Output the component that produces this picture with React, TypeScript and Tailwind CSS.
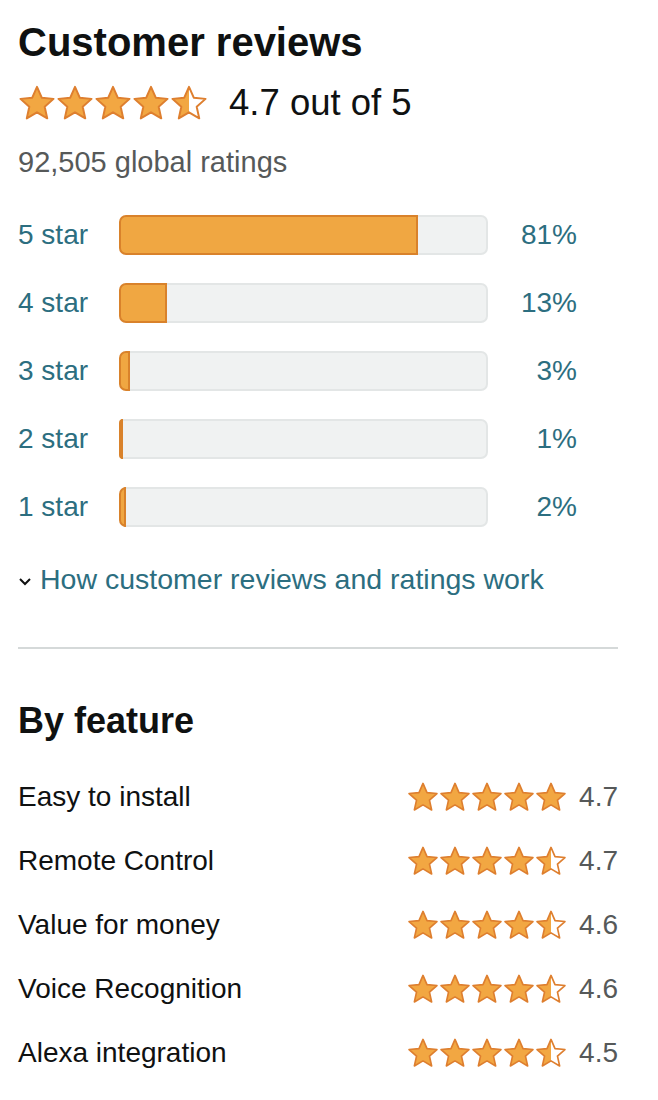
import { useId } from 'react';

const FONT = { fontFamily: '"Liberation Sans", Arial, sans-serif' };

const histogram = [
  { label: '5 star', pct: 81 },
  { label: '4 star', pct: 13 },
  { label: '3 star', pct: 3 },
  { label: '2 star', pct: 1 },
  { label: '1 star', pct: 2 },
];

const features = [
  { name: 'Easy to install', rating: '4.7', stars: 5 },
  { name: 'Remote Control', rating: '4.7', stars: 4.5 },
  { name: 'Value for money', rating: '4.6', stars: 4.5 },
  { name: 'Voice Recognition', rating: '4.6', stars: 4.5 },
  { name: 'Alexa integration', rating: '4.5', stars: 4.5 },
];

// five-point star, a bit plumper than a regular one
const starPoints = (() => {
  const pts: string[] = [];
  const cx = 12;
  const cy = 12.8;
  for (let i = 0; i < 10; i++) {
    const r = i % 2 === 0 ? 11 : 5.1;
    const a = -Math.PI / 2 + (i * Math.PI) / 5;
    pts.push(`${(cx + r * Math.cos(a)).toFixed(2)},${(cy + r * Math.sin(a)).toFixed(2)}`);
  }
  return pts.join(' ');
})();

function Star({ fill, size }: { fill: 'full' | 'half'; size: number }) {
  const id = useId().replace(/:/g, '');
  return (
    <svg width={size} height={size} viewBox="0 0 24 24" className="shrink-0">
      <defs>
        <clipPath id={`h${id}`}>
          <rect x="0" y="0" width="12" height="24" />
        </clipPath>
      </defs>
      <polygon points={starPoints} fill={fill === 'full' ? '#f2a742' : '#ffffff'} />
      {fill === 'half' && (
        <polygon points={starPoints} fill="#f2a742" clipPath={`url(#h${id})`} />
      )}
      <polygon
        points={starPoints}
        fill="none"
        stroke="#de7f2f"
        strokeWidth="1.25"
        strokeLinejoin="round"
      />
    </svg>
  );
}

function StarRow({ value, size }: { value: number; size: number }) {
  return (
    <div className="flex items-center">
      {[1, 2, 3, 4, 5].map((n) => (
        <Star key={n} size={size} fill={value >= n ? 'full' : 'half'} />
      ))}
    </div>
  );
}

function Bar({ pct }: { pct: number }) {
  return (
    <div className="flex h-[40px] w-[369px]">
      <div
        className="h-full shrink-0 rounded-l-[7px] border-2 border-[#d9822b] bg-[#f0a742]"
        style={{ width: `${Math.max(pct * 3.69, 4)}px` }}
      />
      <div className="h-full flex-1 rounded-r-[7px] border-y-2 border-r-2 border-[#e3e6e6] bg-[#f0f2f2]" />
    </div>
  );
}

export default function App() {
  return (
    <div className="min-h-[1100px] bg-white" style={FONT}>
      <div className="ml-[18px] w-[600px] pt-[18px]">
        {/* 顶部评分 */}
        <h2 className="h-[48px] text-[40px] font-bold leading-[48px] text-[#0f1111]">
          Customer reviews
        </h2>
        <div className="mt-[13px] flex h-[48px] items-center">
          <StarRow value={4.5} size={38} />
          <span className="ml-[21px] text-[36.5px] leading-[48px] text-[#0f1111]">
            4.7 out of 5
          </span>
        </div>
        <div className="mt-[15px] h-[40px] text-[29px] leading-[40px] text-[#565959]">
          92,505 global ratings
        </div>

        {/* 星级分布 */}
        <div className="mt-[33px] flex flex-col gap-[28px]">
          {histogram.map((row) => (
            <div key={row.label} className="flex h-[40px] items-center">
              <span className="w-[101px] text-[28px] leading-[40px] text-[#2c6e80]">
                {row.label}
              </span>
              <Bar pct={row.pct} />
              <span className="w-[89px] text-right text-[28px] leading-[40px] text-[#2c6e80]">
                {row.pct}%
              </span>
            </div>
          ))}
        </div>

        <div className="mt-[32px] flex h-[40px] items-center">
          <svg width="14" height="9" viewBox="0 0 14 9" className="mr-[8px] mt-[4px] shrink-0">
            <path d="M2 2 L7 7 L12 2" fill="none" stroke="#0f1111" strokeWidth="2" />
          </svg>
          <span className="text-[28.5px] leading-[40px] text-[#2c6e80]">
            How customer reviews and ratings work
          </span>
        </div>

        <hr className="mt-[48px] border-0 border-t-2 border-[#d5d9d9]" />

        {/* 按特性 */}
        <h3 className="mt-[50px] h-[44px] text-[36px] font-bold leading-[44px] text-[#0f1111]">
          By feature
        </h3>
        <div className="mt-[34px] flex flex-col gap-[24px]">
          {features.map((f) => (
            <div key={f.name} className="flex h-[40px] items-center justify-between">
              <span className="text-[28px] leading-[40px] text-[#0f1111]">{f.name}</span>
              <div className="flex items-center">
                <StarRow value={f.stars} size={32} />
                <span className="ml-[12px] text-[28px] leading-[40px] text-[#565959]">
                  {f.rating}
                </span>
              </div>
            </div>
          ))}
        </div>
      </div>
    </div>
  );
}
